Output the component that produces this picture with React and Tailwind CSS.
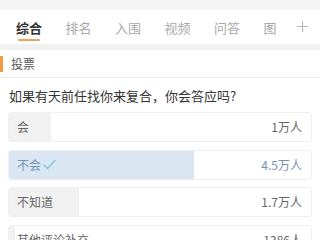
import React from "react";

const font = { fontFamily: '"Noto Sans CJK SC", "Noto Sans", sans-serif' };

const options = [
  { label: "会", count: "1万人", pct: 13.8, chosen: false },
  { label: "不会", count: "4.5万人", pct: 61.2, chosen: true },
  { label: "不知道", count: "1.7万人", pct: 23.1, chosen: false },
  { label: "其他评论补充", count: "1386人", pct: 1.9, chosen: false },
];

export default function App() {
  const tabs = ["排名", "入围", "视频", "问答", "图"];
  return (
    <div className="w-[320px] h-[240px] overflow-hidden bg-white" style={font}>
      <div className="h-[10px] bg-[#f5f5f5]" />
      <div className="h-[34px] bg-white flex items-center pl-4 gap-[23.5px] relative">
        <div className="relative text-[13px] leading-none font-bold text-[#333]">
          综合
          <div className="absolute left-[2px] right-[2px] top-[18px] h-[2.5px] rounded-full bg-[#eaa35a]" />
        </div>
        {tabs.map((t) => (
          <div key={t} className="text-[13px] leading-none text-[#a8a8a8]">
            {t}
          </div>
        ))}
        <svg className="absolute left-[296px] top-[10px]" width="13" height="13" viewBox="0 0 13 13">
          <path d="M6.5 1v11M1 6.5h11" stroke="#b5b5b5" strokeWidth="1" fill="none" />
        </svg>
      </div>
      <div className="h-[6px] bg-[#f1f1f1]" />
      <div className="h-[28px] flex items-center border-b border-[#eeeeee]">
        <div className="w-[3px] h-[16px] bg-[#f39b45]" />
        <div className="ml-[8px] text-[12px] leading-none text-[#555]">投票</div>
      </div>
      <div className="h-[34px] flex items-center pl-[9px] text-[13px] leading-none text-[#333] pt-[1px]">
        如果有天前任找你来复合，你会答应吗?
      </div>
      <div className="flex flex-col gap-[7.5px] px-[8px]">
        {options.map((o) => (
          <div
            key={o.label}
            className="relative h-[30px] rounded-[3px] border border-[#efefef] bg-white overflow-hidden flex items-center justify-between pl-[8px] pr-[9px]"
          >
            <div
              className={`absolute left-0 top-0 bottom-0 ${o.chosen ? "bg-[#dae7f3]" : "bg-[#f1f1f1]"}`}
              style={{ width: `${o.pct}%` }}
            />
            <div
              className={`relative flex items-center text-[12px] leading-none ${o.chosen ? "text-[#7592b3]" : "text-[#666]"}`}
            >
              {o.label}
              {o.chosen && (
                <svg className="ml-[2px]" width="13" height="11" viewBox="0 0 13 11">
                  <path d="M1 6l3.5 3.5L12 1.5" stroke="#8cc3ee" strokeWidth="1.6" fill="none" strokeLinecap="round" strokeLinejoin="round" />
                </svg>
              )}
            </div>
            <div
              className={`relative text-[12px] leading-none ${o.chosen ? "text-[#7592b3]" : "text-[#666]"}`}
            >
              {o.count}
            </div>
          </div>
        ))}
      </div>
    </div>
  );
}
